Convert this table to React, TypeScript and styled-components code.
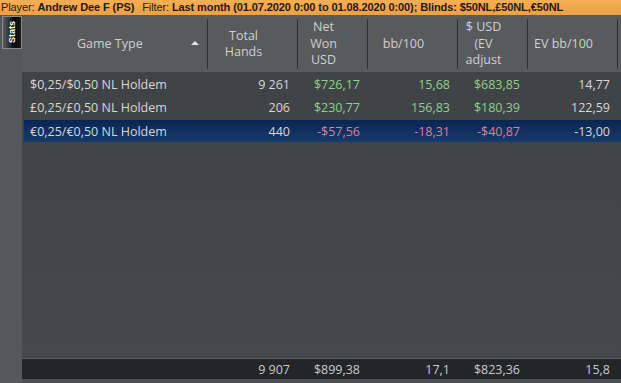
import React from 'react';
import styled, { createGlobalStyle } from 'styled-components';

const GlobalStyle = createGlobalStyle`
  html, body {
    margin: 0;
    padding: 0;
    background: #4e5153;
  }
  * {
    box-sizing: border-box;
  }
`;

const COLS = '186px 90px 70px 90px 70px 90px 1fr';

type Tone = 'plain' | 'green' | 'red';

const toneColor = (tone: Tone) => {
  if (tone === 'green') return '#8fd08a';
  if (tone === 'red') return '#e07c9c';
  return '#d6d7d8';
};

const Page = styled.div`
  width: 621px;
  height: 383px;
  display: flex;
  flex-direction: column;
  overflow: hidden;
  font-family: 'Open Sans', 'Noto Sans', sans-serif;
`;

const TopBar = styled.div`
  height: 15px;
  flex: 0 0 15px;
  background: linear-gradient(#f6ae55, #eda045);
  color: #1c1a16;
  font-family: 'Liberation Sans', Arial, sans-serif;
  font-size: 11px;
  letter-spacing: -0.1px;
  line-height: 15px;
  padding-left: 1px;
  white-space: nowrap;
  overflow: hidden;
`;

const Label = styled.span`
  font-weight: normal;
`;

const Value = styled.span`
  font-weight: bold;
  margin-right: 5px;
`;

const Main = styled.div`
  flex: 1;
  display: flex;
  min-height: 0;
`;

const SideStrip = styled.div`
  width: 22px;
  flex: 0 0 22px;
  background: #55585a;
  padding: 1px 0 0 2px;
`;

const StatsTab = styled.div`
  width: 20px;
  height: 33px;
  border: 1px solid #8a8c8e;
  background: linear-gradient(90deg, #5a5c5e 0%, #2a2a2a 40%, #050505 60%, #1a1a1a 100%);
  display: flex;
  align-items: center;
  justify-content: center;
`;

const TabText = styled.span`
  writing-mode: vertical-rl;
  transform: rotate(180deg);
  color: #ffffff;
  font-family: 'Liberation Sans', Arial, sans-serif;
  font-weight: bold;
  font-size: 9px;
`;

const Content = styled.div`
  flex: 1;
  display: flex;
  flex-direction: column;
  min-width: 0;
`;

const Header = styled.div`
  height: 57px;
  flex: 0 0 57px;
  display: grid;
  grid-template-columns: ${COLS};
  background: #585a5c;
  padding: 4px 0 3px;
`;

const HeaderCell = styled.div<{ $last?: boolean }>`
  display: flex;
  align-items: center;
  justify-content: center;
  text-align: center;
  padding-right: 18px;
  border-right: ${(p) => (p.$last ? 'none' : '1px solid #2d2f31')};
  color: #cfd0d1;
  font-size: 12.5px;
  line-height: 16.5px;
`;

const GameHeader = styled(HeaderCell)`
  padding-right: 0;
  justify-content: space-between;
  padding-left: 55px;
`;

const SortArrow = styled.span`
  width: 0;
  height: 0;
  border-left: 4px solid transparent;
  border-right: 4px solid transparent;
  border-bottom: 4px solid #e4e4e4;
  margin-right: 8px;
  margin-top: -2px;
`;

const Body = styled.div`
  flex: 1;
  background: linear-gradient(#404345, #46494c);
  padding-top: 1px;
  border-bottom: 1px solid #55585a;
`;

const Row = styled.div<{ $selected?: boolean }>`
  display: grid;
  grid-template-columns: ${COLS};
  height: ${(p) => (p.$selected ? '22px' : '23px')};
  margin-top: ${(p) => (p.$selected ? '1px' : '0')};
  background: ${(p) =>
    p.$selected
      ? 'linear-gradient(90deg, #404345 0 2px, transparent 2px), linear-gradient(#0a2552, #173b6d)'
      : 'transparent'};
  align-items: center;
  font-size: 12.5px;
`;

const Cell = styled.div<{ $tone?: Tone; $left?: boolean }>`
  color: ${(p) => toneColor(p.$tone || 'plain')};
  text-align: ${(p) => (p.$left ? 'left' : 'right')};
  padding: ${(p) => (p.$left ? '0 0 0 8px' : '0 8px 0 0')};
  white-space: nowrap;
  overflow: hidden;
`;

const TotalRow = styled.div`
  height: 20px;
  flex: 0 0 20px;
  display: grid;
  grid-template-columns: ${COLS};
  align-items: center;
  background: #222629;
  font-size: 12.5px;
`;

const TotalCell = styled(Cell)`
  color: #c9cacb;
`;

const Footer = styled.div`
  height: 4px;
  flex: 0 0 4px;
  background: #4e5153;
`;

type Stat = {
  game: string;
  hands: string;
  net: string;
  bb: string;
  ev: string;
  evbb: string;
  tone: Tone;
};

const rows: Stat[] = [
  { game: '$0,25/$0,50 NL Holdem', hands: '9 261', net: '$726,17', bb: '15,68', ev: '$683,85', evbb: '14,77', tone: 'green' },
  { game: '£0,25/£0,50 NL Holdem', hands: '206', net: '$230,77', bb: '156,83', ev: '$180,39', evbb: '122,59', tone: 'green' },
  { game: '€0,25/€0,50 NL Holdem', hands: '440', net: '-$57,56', bb: '-18,31', ev: '-$40,87', evbb: '-13,00', tone: 'red' },
];

export default function App() {
  return (
    <>
      <GlobalStyle />
      <Page>
        <TopBar>
          <Label>Player: </Label>
          <Value>Andrew Dee F (PS)</Value>
          <Label> Filter: </Label>
          <Value>Last month (01.07.2020 0:00 to 01.08.2020 0:00); Blinds: $50NL,£50NL,€50NL</Value>
        </TopBar>
        <Main>
          <SideStrip>
            <StatsTab>
              <TabText>Stats</TabText>
            </StatsTab>
          </SideStrip>
          <Content>
            <Header>
              <GameHeader>
                <span>Game Type</span>
                <SortArrow />
              </GameHeader>
              <HeaderCell>Total<br />Hands</HeaderCell>
              <HeaderCell>Net<br />Won<br />USD</HeaderCell>
              <HeaderCell>bb/100</HeaderCell>
              <HeaderCell>$ USD<br />(EV<br />adjust</HeaderCell>
              <HeaderCell>EV bb/100</HeaderCell>
              <HeaderCell $last />
            </Header>
            <Body>
              {rows.map((r, i) => (
                <Row key={r.game} $selected={i === 2}>
                  <Cell $left>{r.game}</Cell>
                  <Cell>{r.hands}</Cell>
                  <Cell $tone={r.tone}>{r.net}</Cell>
                  <Cell $tone={r.tone}>{r.bb}</Cell>
                  <Cell $tone={r.tone}>{r.ev}</Cell>
                  <Cell>{r.evbb}</Cell>
                  <Cell />
                </Row>
              ))}
            </Body>
            <TotalRow>
              <TotalCell />
              <TotalCell>9 907</TotalCell>
              <TotalCell>$899,38</TotalCell>
              <TotalCell>17,1</TotalCell>
              <TotalCell>$823,36</TotalCell>
              <TotalCell>15,8</TotalCell>
              <TotalCell />
            </TotalRow>
            <Footer />
          </Content>
        </Main>
      </Page>
    </>
  );
}
